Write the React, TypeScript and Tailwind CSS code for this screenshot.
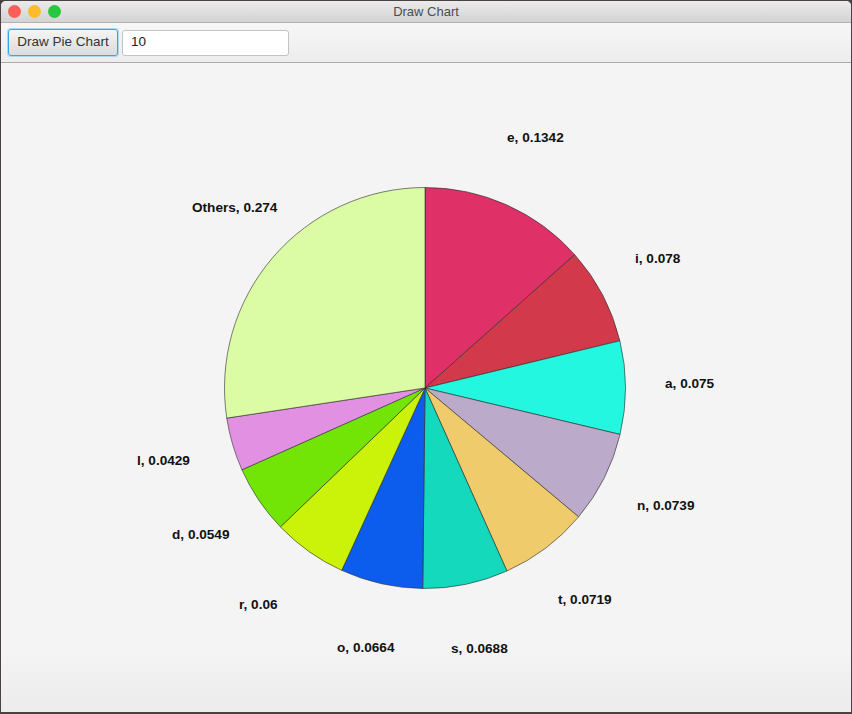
const slices = [
  { label: "e", value: 0.1342, color: "#e03068", lx: 507, ly: 137 },
  { label: "i", value: 0.078, color: "#d23a4c", lx: 635, ly: 258 },
  { label: "a", value: 0.075, color: "#24f7e0", lx: 665, ly: 383 },
  { label: "n", value: 0.0739, color: "#bcaacb", lx: 637, ly: 505 },
  { label: "t", value: 0.0719, color: "#efcb6c", lx: 558, ly: 599 },
  { label: "s", value: 0.0688, color: "#14d9bd", lx: 451, ly: 648 },
  { label: "o", value: 0.0664, color: "#0c5ded", lx: 337, ly: 647 },
  { label: "r", value: 0.06, color: "#cbf30a", lx: 239, ly: 604 },
  { label: "d", value: 0.0549, color: "#73e506", lx: 172, ly: 534 },
  { label: "l", value: 0.0429, color: "#e290e2", lx: 137, ly: 460 },
  { label: "Others", value: 0.274, color: "#dbfba5", lx: 192, ly: 207 },
];

// svg origin sits at page (1, 63)
const OX = 1;
const OY = 63;
const CX = 425 - OX;
const CY = 388 - OY;
const R = 200.5;

function point(frac: number) {
  const a = frac * Math.PI * 2;
  return [CX + R * Math.sin(a), CY - R * Math.cos(a)];
}

function PieChart() {
  let acc = 0;
  return (
    <svg width={850} height={649} className="block">
      {slices.map((s) => {
        const [x1, y1] = point(acc);
        acc += s.value;
        const [x2, y2] = point(acc);
        const large = s.value > 0.5 ? 1 : 0;
        return (
          <path
            key={s.label}
            d={`M${CX},${CY} L${x1},${y1} A${R},${R} 0 ${large} 1 ${x2},${y2} Z`}
            fill={s.color}
            stroke="#2a2a2a"
            strokeWidth={0.6}
          />
        );
      })}
      {slices.map((s) => (
        <text
          key={s.label + "-t"}
          x={s.lx - OX}
          y={s.ly - OY}
          dominantBaseline="central"
          fontFamily="'Liberation Sans', Arial, sans-serif"
          fontWeight={700}
          fontSize={13.6}
          fill="#111"
        >
          {s.label}, {s.value}
        </text>
      ))}
    </svg>
  );
}

export default function App() {
  return (
    <div className="w-[852px] h-[714px] bg-[#4a4240] pt-px px-px pb-[2px] font-['Liberation_Sans',Arial,sans-serif]">
      <div className="w-[850px] h-[711px] flex flex-col rounded-t-[5px] overflow-hidden bg-[#f4f4f4]">
        {/* Title bar */}
        <div className="relative h-[22px] shrink-0 flex items-center bg-gradient-to-b from-[#ebebeb] to-[#d3d3d3] border-b border-[#b1b1b1]">
          <div className="flex items-center gap-[7px] pl-[7px]">
            <span className="w-[13px] h-[13px] rounded-full bg-[#fc5f57]" />
            <span className="w-[13px] h-[13px] rounded-full bg-[#fdbc2e]" />
            <span className="w-[13px] h-[13px] rounded-full bg-[#27c840]" />
          </div>
          <div className="absolute inset-0 flex items-center justify-center text-[13px] text-[#4d4d4d]">
            Draw Chart
          </div>
        </div>

        {/* Toolbar */}
        <div className="h-[40px] shrink-0 flex items-center gap-[4px] px-[7px] bg-gradient-to-b from-[#f7f7f7] to-[#ececec] border-b border-[#a9a9a9]">
          <button className="w-[110px] h-[27px] rounded-[3px] border border-[#3aa5e6] bg-gradient-to-b from-[#f4f4f4] to-[#dcdcdc] text-[13.5px] text-[#333] shadow-[0_0_0_1px_#a9d8f5]">
            Draw Pie Chart
          </button>
          <div className="w-[167px] h-[26px] rounded-[3px] border border-[#c2c2c2] bg-white flex items-center pl-[8px] text-[13.5px] text-[#222]">
            10
          </div>
        </div>

        {/* Chart area */}
        <div className="flex-1 bg-gradient-to-b from-[#f4f4f4] from-90% to-[#ececec]">
          <PieChart />
        </div>
      </div>
    </div>
  );
}
